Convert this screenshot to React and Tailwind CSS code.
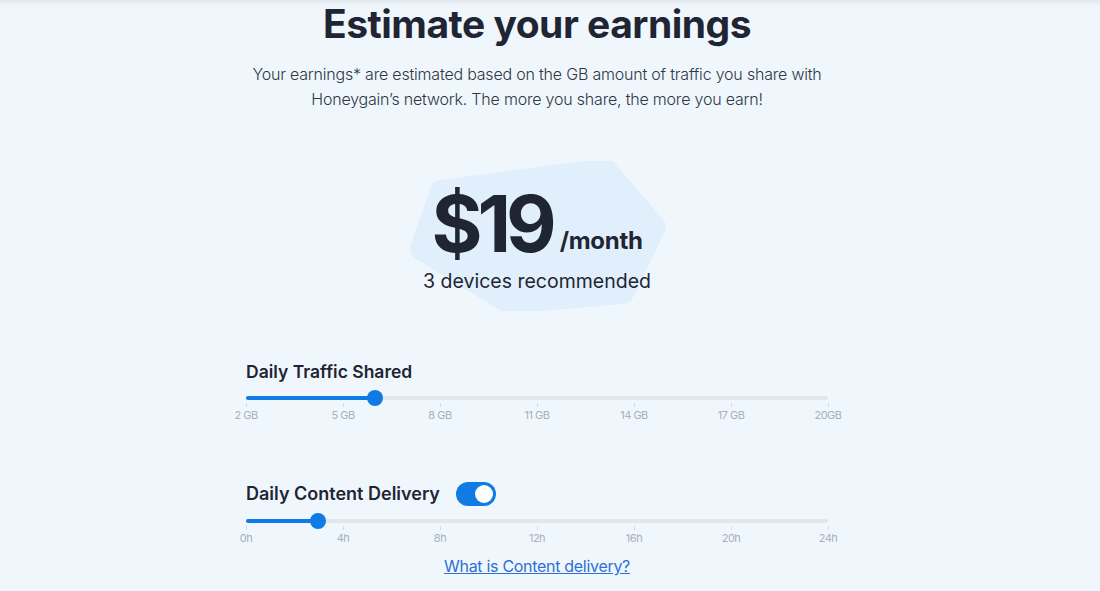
import { useState } from "react";

const font = { fontFamily: "Inter, 'Noto Sans', sans-serif" };

const Slider = ({ value, labels }) => (
  <div className="w-full">
    <div className="relative h-4 flex items-center">
      <div className="h-[4px] w-full rounded-full bg-[#e2e7ed]" />
      <div
        className="absolute left-0 h-[4px] rounded-full bg-[#0f7be3]"
        style={{ width: `${value}%` }}
      />
      <div
        className="absolute h-4 w-4 -ml-2 rounded-full bg-[#0f7be3]"
        style={{ left: `${value}%` }}
      />
    </div>
    <div className="-mt-[3px] flex justify-between">
      {labels.map((l) => (
        <div key={l} className="w-0 flex flex-col items-center">
          <div className="h-[4px] w-px bg-[#d3d9e0]" />
          <span className="whitespace-nowrap text-[11px] leading-4 tracking-[-0.5px] text-[#a9b0b9]">
            {l}
          </span>
        </div>
      ))}
    </div>
  </div>
);

export default function App() {
  const [on, setOn] = useState(true);

  return (
    <div
      className="min-h-screen bg-[#eff7fd] shadow-[inset_0_6px_8px_-6px_rgba(0,0,0,0.12)] flex justify-center pr-[26px]"
      style={font}
    >
      <div className="w-[640px] flex flex-col items-center">
        <h1 className="mt-[1px] text-[39px] leading-[46px] font-bold tracking-[-0.5px] text-[#1f2533]">
          Estimate your earnings
        </h1>
        <p className="mt-[15px] w-[620px] text-center text-[16px] leading-[25px] font-light tracking-[-0.2px] text-[#2f3644]">
          Your earnings* are estimated based on the GB amount of traffic you share with
          <br />
          Honeygain’s network. The more you share, the more you earn!
        </p>

        <div className="relative mt-[49px] w-[260px] h-[150px] flex flex-col items-center">
          <svg
            className="absolute left-[2px] top-0"
            width="258"
            height="150"
            viewBox="0 0 258 150"
          >
            <path
              d="M32 30 L196 8 L246 66 L214 132 L100 142 L12 88 Z"
              fill="#e1effc"
              stroke="#e1effc"
              strokeWidth="22"
              strokeLinejoin="round"
            />
          </svg>
          <div className="relative mt-[24px] flex items-end">
            <span className="text-[78px] leading-[78px] font-bold tracking-[-5px] text-[#1f2533]">
              $19
            </span>
            <span className="ml-[8px] mb-[8px] text-[24px] leading-[28px] font-bold tracking-[-0.3px] text-[#1f2533]">
              /month
            </span>
          </div>
          <div className="relative mt-[4px] text-[19.5px] leading-[28px] text-[#1f2533]">
            3 devices recommended
          </div>
        </div>

        <div className="mt-[49px] w-[582px]">
          <div className="text-[17.5px] leading-6 font-semibold text-[#1f2533]">
            Daily Traffic Shared
          </div>
          <div className="mt-[6px]">
            <Slider
              value={22.2}
              labels={["2 GB", "5 GB", "8 GB", "11 GB", "14 GB", "17 GB", "20GB"]}
            />
          </div>

          <div className="mt-[59px] flex items-center gap-4">
            <span className="text-[18px] leading-6 font-semibold text-[#1f2533]">
              Daily Content Delivery
            </span>
            <button
              onClick={() => setOn(!on)}
              className={`w-10 h-6 rounded-full p-[3px] flex ${
                on ? "bg-[#0f7be3] justify-end" : "bg-[#cfd6de] justify-start"
              }`}
            >
              <span className="h-[18px] w-[18px] rounded-full bg-white" />
            </button>
          </div>
          <div className="mt-[7px]">
            <Slider
              value={12.4}
              labels={["0h", "4h", "8h", "12h", "16h", "20h", "24h"]}
            />
          </div>
          <div className="mt-[8px] text-center">
            <a
              href="#"
              className="text-[16px] underline text-[#2f6fd3] tracking-[-0.3px]"
            >
              What is Content delivery?
            </a>
          </div>
        </div>
      </div>
    </div>
  );
}
